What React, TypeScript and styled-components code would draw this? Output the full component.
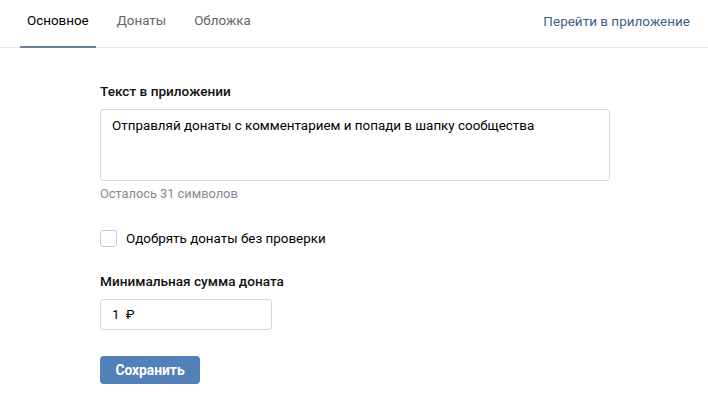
import React, { useState } from "react";
import styled, { createGlobalStyle } from "styled-components";

const Global = createGlobalStyle`
  html, body { margin: 0; padding: 0; background: #fff; }
  body { font-family: Roboto, "Noto Sans", "Liberation Sans", sans-serif; color: #000; -webkit-font-smoothing: antialiased; }
  * { box-sizing: border-box; }
`;

const Page = styled.div`
  width: 708px;
  min-height: 414px;
  background: #fff;
`;

const Header = styled.div`
  display: flex;
  align-items: stretch;
  justify-content: space-between;
  height: 48px;
  padding: 0 18px 0 20px;
  border-bottom: 1px solid #e7e8ec;
`;

const Tabs = styled.div`
  display: flex;
  gap: 14px;
`;

const Tab = styled.div<{ $active?: boolean }>`
  display: flex;
  align-items: center;
  padding: 0 7px 5px;
  font-size: 13.4px;
  color: ${(p) => (p.$active ? "#000" : "#656565")};
  border-bottom: 2px solid ${(p) => (p.$active ? "#6e8196" : "transparent")};
  margin-bottom: -1px;
  cursor: pointer;
`;

const HeaderLink = styled.a`
  display: flex;
  align-items: center;
  padding-bottom: 5px;
  font-size: 13.5px;
  color: #3d5f85;
  text-decoration: none;
  cursor: pointer;
`;

const Content = styled.div`
  display: flex;
  flex-direction: column;
  align-items: flex-start;
  padding: 35px 100px 0;
`;

const Label = styled.div`
  font-size: 13.6px;
  font-weight: 500;
  line-height: 16px;
  margin-bottom: 10px;
  color: #111;
`;

const TextArea = styled.div`
  width: 510px;
  height: 72px;
  border: 1px solid #d3d9de;
  border-radius: 3px;
  padding: 7px 11px;
  font-size: 13.4px;
  line-height: 18px;
`;

const Hint = styled.div`
  margin-top: 5px;
  font-size: 12.8px;
  line-height: 16px;
  color: #828a94;
`;

const CheckRow = styled.label`
  display: flex;
  align-items: center;
  gap: 9px;
  margin-top: 28px;
  margin-bottom: 26px;
  font-size: 13.4px;
  cursor: pointer;
`;

const Box = styled.span<{ $checked?: boolean }>`
  width: 17px;
  height: 17px;
  border: 1px solid #c5ccd3;
  border-radius: 3px;
  background: ${(p) => (p.$checked ? "#5181b8" : "#fff")};
`;

const Input = styled.div`
  width: 172px;
  height: 31px;
  border: 1px solid #d3d9de;
  border-radius: 3px;
  display: flex;
  align-items: center;
  padding: 0 11px;
  font-size: 13.4px;
  word-spacing: 3px;
`;

const Button = styled.button`
  margin-top: 26px;
  width: 100px;
  height: 28px;
  border: none;
  border-radius: 4px;
  background: #5181b8;
  color: #fff;
  font-family: inherit;
  font-size: 13.8px;
  font-weight: 700;
  cursor: pointer;
`;

export default function App() {
  const [checked, setChecked] = useState(false);
  return (
    <Page>
      <Global />
      <Header>
        <Tabs>
          <Tab $active>Основное</Tab>
          <Tab>Донаты</Tab>
          <Tab>Обложка</Tab>
        </Tabs>
        <HeaderLink>Перейти в приложение</HeaderLink>
      </Header>
      <Content>
        <Label>Текст в приложении</Label>
        <TextArea>Отправляй донаты с комментарием и попади в шапку сообщества</TextArea>
        <Hint>Осталось 31 символов</Hint>
        <CheckRow onClick={() => setChecked(!checked)}>
          <Box $checked={checked} />
          Одобрять донаты без проверки
        </CheckRow>
        <Label>Минимальная сумма доната</Label>
        <Input>1 ₽</Input>
        <Button>Сохранить</Button>
      </Content>
    </Page>
  );
}
